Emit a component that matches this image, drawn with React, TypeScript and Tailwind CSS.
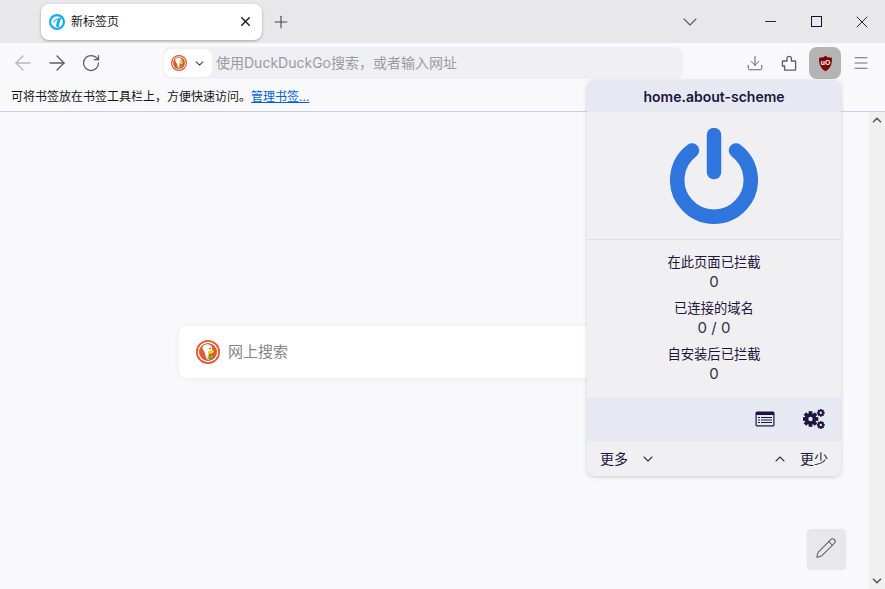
import { Plus, X, ChevronDown, ChevronUp, ArrowLeft, ArrowRight, RotateCw, Download, Menu, Minus, Pencil } from "lucide-react";

const cjk = { fontFamily: '"Inter", "Noto Sans CJK SC", sans-serif' };

const DuckLogo = ({ size }: { size: number }) => (
  <svg width={size} height={size} viewBox="0 0 24 24">
    <circle cx="12" cy="12" r="12" fill="#de5833" />
    <circle cx="12" cy="12" r="10.200" fill="#fff" />
    <circle cx="12" cy="12" r="9" fill="#de5833" />
    <path d="M6.500 7c1.500-3 7-4 9-.5 1 1.800.8 3.500.5 4.500l-3.500 1 .3 8c-2.200-.3-3-3-3.800-6.500C8.500 11 6 9.500 6.500 7z" fill="#fff" />
    <path d="M12 11.200l5-1.500 1.200 1.800-2 2-4 .5z" fill="#fdd20a" />
    <path d="M11.500 16.500l5-1.200.5 2.500-5.300 1z" fill="#65bc46" />
    <circle cx="14" cy="8.600" r=".8" fill="#2d4f8e" />
  </svg>
);

const FirefoxTabIcon = () => (
  <svg width="16" height="16" viewBox="0 0 16 16">
    <circle cx="8" cy="8" r="8" fill="#14adf4" />
    <circle cx="8" cy="8" r="5.800" fill="#fff" />
    <path d="M4.300 8.500C4.500 5.500 8 3.900 12.300 3.900 11 6.500 10.200 9.500 9.800 13l-2.800-.3.700-4.700 1.200-2.500C7.300 5.700 5.500 6.700 5.200 8.500z" fill="#14adf4" />
  </svg>
);

const PuzzleIcon = () => (
  <svg width="16" height="16" viewBox="0 0 16 16" fill="none" stroke="#5b5b66" strokeWidth="1.300" strokeLinejoin="round">
    <path d="M3.600 15.200H14a.6.6 0 0 0 .6-.6V6.600A.6.6 0 0 0 14 6H10.400V3.400c0-2.800-4.400-2.800-4.400 0V6H2a.6.6 0 0 0-.6.6V11h2.200z" />
  </svg>
);

const UboIcon = () => (
  <svg width="17" height="17" viewBox="0 0 16 16">
    <path d="M8 .8l2 1.300 4 .4c.3 4.700-.5 9.600-6 12.700C2.500 12.100 1.700 7.200 2 2.500l4-.4z" fill="#800000" />
    <text x="8" y="9.700" textAnchor="middle" fontSize="6.500" fontWeight="700" fill="#fff" fontFamily="Liberation Sans, sans-serif">uO</text>
  </svg>
);

const PowerIcon = () => (
  <svg width="88" height="97" viewBox="0 0 88 97" fill="none" stroke="#2e75de" strokeLinecap="round" strokeWidth="14.500">
    <path d="M22 22.500a36.750 36.750 0 1 0 44 0" />
    <path d="M44 7v37" />
  </svg>
);

const ListIcon = () => (
  <svg width="20" height="16" viewBox="0 0 20 16">
    <rect x="0.500" y="0.500" width="19" height="15" rx="1.500" fill="#1f1440" />
    <rect x="1.700" y="4" width="16.600" height="10.300" fill="#e6e8f2" />
    <path d="M3 6h2v1H3zM6 6h11v1H6zM3 8.500h2v1H3zM6 8.500h11v1H6zM3 11h2v1H3zM6 11h11v1H6z" fill="#1f1440" />
  </svg>
);

const Gear = ({ cx, cy, r, hole }: { cx: number; cy: number; r: number; hole: number }) => (
  <g fill="#1f1440">
    <circle cx={cx} cy={cy} r={r} />
    {[0, 45, 90, 135].map((a) => (
      <rect
        key={a}
        x={cx - r * 0.32}
        y={cy - r * 1.35}
        width={r * 0.64}
        height={r * 2.7}
        transform={`rotate(${a} ${cx} ${cy})`}
      />
    ))}
    <circle cx={cx} cy={cy} r={hole} fill="#e6e8f2" />
  </g>
);

const GearsIcon = () => (
  <svg width="22" height="20" viewBox="0 0 22 20">
    <Gear cx={7.500} cy={10} r={5.800} hole={2.200} />
    <Gear cx={17.800} cy={3.800} r={2.900} hole={1.200} />
    <Gear cx={17.800} cy={16} r={2.900} hole={1.200} />
  </svg>
);

const Stat = ({ label, value }: { label: string; value: string }) => (
  <div className="flex flex-col items-center h-[46px] pt-[1px] text-[13.300px] leading-[22px]">
    <span className="text-[#1f1440]">{label}</span>
    <span className="text-[15px] leading-[18px] text-[#3a2a4a]">{value}</span>
  </div>
);

const Popup = () => (
  <div className="absolute left-[587px] top-[80px] w-[254px] h-[396px] flex flex-col rounded-lg bg-[#f0f0f2] shadow-[0_1px_4px_rgba(0,0,0,0.18)] overflow-hidden" style={cjk}>
    <div className="h-[32px] shrink-0 flex items-center justify-center bg-[#e6e8f2] text-[14px] font-semibold text-[#1f1440]">
      home.about-scheme
    </div>
    <div className="h-[128px] shrink-0 flex justify-center pt-[16px] border-b border-[#e0e0e2]">
      <PowerIcon />
    </div>
    <div className="flex flex-col pt-[10px] h-[158px] shrink-0">
      <Stat label="在此页面已拦截" value="0" />
      <Stat label="已连接的域名" value="0 / 0" />
      <Stat label="自安装后已拦截" value="0" />
    </div>
    <div className="h-[43px] shrink-0 flex items-center justify-end gap-[28px] pr-[16px] pb-[1px] bg-[#e6e8f2]">
      <ListIcon />
      <GearsIcon />
    </div>
    <div className="flex-1 flex items-center justify-between px-[13px] text-[14px] text-[#1f1440]">
      <div className="flex items-center gap-[12px]">
        <span>更多</span>
        <ChevronDown size={16} strokeWidth={1.700} className="text-[#3a3450]" />
      </div>
      <div className="flex items-center gap-[12px]">
        <ChevronUp size={16} strokeWidth={1.700} className="text-[#3a3450]" />
        <span>更少</span>
      </div>
    </div>
  </div>
);

export default function App() {
  return (
    <div className="relative w-[885px] h-[589px] overflow-hidden flex flex-col bg-[#f9f9fb]" style={cjk}>
      {/* tab strip */}
      <div className="h-[43px] shrink-0 flex items-center bg-[#e8e8eb] pl-[41px]">
        <div className="w-[221px] h-[36px] flex items-center pl-[8px] pr-[9px] rounded-lg bg-white shadow-[0_1px_3px_rgba(0,0,0,0.3)]">
          <FirefoxTabIcon />
          <span className="ml-[6px] text-[12px] text-[#15141a]">新标签页</span>
          <X size={15} strokeWidth={2.200} className="ml-auto text-[#15141a]" />
        </div>
        <Plus size={20} strokeWidth={1.300} className="ml-[9px] text-[#45444d]" />
        <ChevronDown size={24} strokeWidth={1.100} className="ml-[387px] text-[#5b5b66]" />
        <Minus size={17} strokeWidth={1.300} className="ml-[60px] text-[#15141a]" />
        <div className="ml-[32px] w-[11px] h-[11px] border border-[#15141a]" />
        <X size={20} strokeWidth={1.100} className="ml-[30px] text-[#15141a]" />
      </div>
      {/* nav bar */}
      <div className="h-[40px] shrink-0 flex items-center bg-[#f9f9fb] pl-[11px]">
        <ArrowLeft size={24} strokeWidth={1.400} className="text-[#b8b8bc]" />
        <ArrowRight size={24} strokeWidth={1.400} className="ml-[10px] text-[#5b5b66]" />
        <RotateCw size={20} strokeWidth={1.500} className="ml-[12px] text-[#5b5b66]" />
        <div className="ml-[62px] w-[520px] h-[32px] flex items-center rounded-lg bg-[#f0f0f4]">
          <div className="w-[48px] h-[28px] ml-[1px] flex items-center pl-[7px] gap-[6px] rounded-lg bg-white">
            <DuckLogo size={16} />
            <ChevronDown size={13} strokeWidth={2} className="text-[#45444d]" />
          </div>
          <span className="ml-[4px] mb-[1px] text-[14px] text-[#9a9aa0]">使用DuckDuckGo搜索，或者输入网址</span>
        </div>
        <Download size={18} strokeWidth={1.300} className="ml-[63px] text-[#5b5b66]" />
        <div className="ml-[17px]"><PuzzleIcon /></div>
        <div className="ml-[12px] w-[32px] h-[32px] flex items-center justify-center rounded-lg bg-[#b4b4b4]">
          <UboIcon />
        </div>
        <Menu size={18} strokeWidth={1.200} className="ml-[11px] text-[#5b5b66]" />
      </div>
      {/* bookmarks bar */}
      <div className="h-[29px] shrink-0 flex items-center pl-[11px] border-b border-[#d0d0d4] text-[12px] text-[#15141a]">
        可将书签放在书签工具栏上，方便快速访问。
        <span className="text-[#0060df] underline">管理书签...</span>
      </div>
      {/* content */}
      <div className="flex-1 flex min-h-0">
        <div className="flex-1 flex justify-center pt-[214px]">
          <div className="w-[511px] h-[52px] flex items-center pl-[17px] rounded-lg bg-white shadow-[0_1px_6px_rgba(0,0,0,0.06)]">
            <DuckLogo size={24} />
            <span className="ml-[8px] mt-[1px] text-[15px] text-[#85858c]">网上搜索</span>
          </div>
        </div>
        <div className="w-[16px] shrink-0 flex flex-col items-center justify-between py-[1px] bg-[#f0f0f0] text-[#606060]">
          <ChevronUp size={14} strokeWidth={3} />
          <ChevronDown size={14} strokeWidth={3} />
        </div>
      </div>
      <Popup />
      {/* edit button */}
      <div className="absolute left-[807px] top-[529px] w-[39px] h-[40px] flex items-center justify-center pr-[2px] pb-[2px] rounded bg-[#e8e8eb] shadow-[0_1px_2px_rgba(0,0,0,0.08)]">
        <Pencil size={22} strokeWidth={1.100} className="text-[#5b5b66]" />
      </div>
    </div>
  );
}
